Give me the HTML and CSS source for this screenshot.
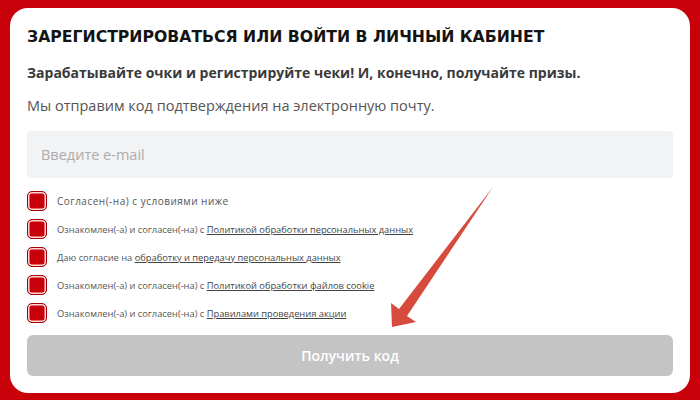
FILE: index.html
```html
<!DOCTYPE html>
<html lang="ru">
<head>
<meta charset="utf-8">
<title>Регистрация</title>
<link rel="stylesheet" href="styles.css">
</head>
<body>
<main class="card">
  <h1 class="title">ЗАРЕГИСТРИРОВАТЬСЯ ИЛИ ВОЙТИ В ЛИЧНЫЙ КАБИНЕТ</h1>
  <p class="lead">Зарабатывайте очки и регистрируйте чеки! И, конечно, получайте призы.</p>
  <p class="note">Мы отправим код подтверждения на электронную почту.</p>
  <input class="email" type="text" placeholder="Введите e-mail">
  <ul class="checks">
    <li class="check"><span class="box"></span><span class="label label-all">Согласен(-на) с условиями ниже</span></li>
    <li class="check"><span class="box"></span><span class="label">Ознакомлен(-а) и согласен(-на) с <a href="#">Политикой обработки персональных данных</a></span></li>
    <li class="check"><span class="box"></span><span class="label">Даю согласие на <a href="#">обработку и передачу персональных данных</a></span></li>
    <li class="check"><span class="box"></span><span class="label">Ознакомлен(-а) и согласен(-на) с <a href="#">Политикой обработки файлов cookie</a></span></li>
    <li class="check"><span class="box"></span><span class="label">Ознакомлен(-а) и согласен(-на) с <a href="#">Правилами проведения акции</a></span></li>
  </ul>
  <button class="submit" type="button">Получить код</button>
</main>
<svg class="arrow" width="700" height="400" viewBox="0 0 700 400">
  <polygon points="392,327 391,303 399,309 493,187 407,316 416,322" fill="#d64b3e"/>
</svg>
</body>
</html>
```
FILE: styles.css
```css
* { box-sizing: border-box; }
html, body { margin: 0; padding: 0; }
body {
  width: 700px;
  height: 400px;
  background: #c8000a;
  font-family: "Open Sans", "DejaVu Sans", sans-serif;
  position: relative;
  overflow: hidden;
}
.card {
  margin: 8px 0 0 10px;
  width: 680px;
  height: 385px;
  background: #fff;
  border-radius: 18px;
  padding: 19px 17px 17px;
  display: flex;
  flex-direction: column;
}
.title {
  margin: 0;
  font-family: "DejaVu Sans", sans-serif;
  font-size: 15.7px;
  line-height: 20px;
  font-weight: 700;
  color: #141414;
}
.lead {
  margin: 16px 0 0;
  font-size: 14px;
  line-height: 20px;
  font-weight: 700;
  color: #3a3a3a;
}
.note {
  margin: 13px 0 0;
  font-size: 14.5px;
  line-height: 20px;
  color: #555;
}
.email {
  margin-top: 15px;
  height: 47px;
  border: none;
  border-radius: 4px;
  background: #f2f3f5;
  padding: 0 14px;
  font-family: inherit;
  font-size: 14.5px;
  color: #333;
  outline: none;
}
.email::placeholder { color: #acacac; }
.checks {
  list-style: none;
  margin: 13px 0 0;
  padding: 0;
  display: flex;
  flex-direction: column;
  gap: 8px;
}
.check {
  display: flex;
  align-items: center;
  gap: 10px;
  height: 20px;
}
.box {
  width: 20px;
  height: 20px;
  flex: none;
  border-radius: 5px;
  background: #c8000a;
  border: 1px solid #a5000a;
  box-shadow: inset 0 0 0 1.5px #ffd6d6;
}
.label {
  font-size: 9.3px;
  color: #555;
}
.label-all {
  font-size: 10px;
  letter-spacing: 0.5px;
}
.label a { color: #444; text-decoration: underline; }
.submit {
  margin-top: 12px;
  height: 41px;
  border: none;
  border-radius: 6px;
  background: #c4c4c4;
  color: #fff;
  font-family: inherit;
  font-size: 14px;
  font-weight: 600;
}
.arrow {
  position: absolute;
  left: 0;
  top: 0;
  pointer-events: none;
}
```
